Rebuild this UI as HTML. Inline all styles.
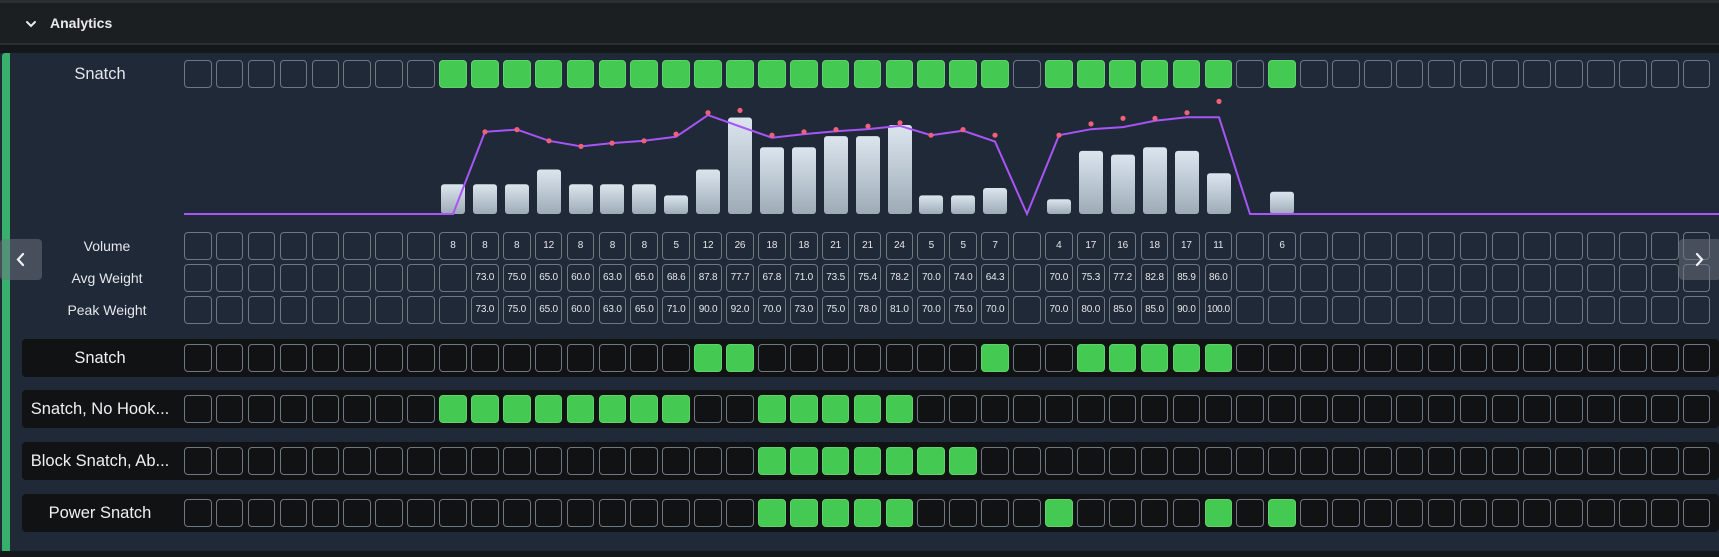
<!DOCTYPE html>
<html><head><meta charset="utf-8"><style>
*{margin:0;padding:0;box-sizing:border-box}
body{width:1719px;height:557px;background:#15181b;position:relative;overflow:hidden;font-family:"Liberation Sans",sans-serif;color:#e5e7eb}
.hdr{position:absolute;left:0;top:0;width:1719px;height:45px;background:#1c1f22;border-top:3px solid #2b2f33;border-bottom:2px solid #2b2f33}
.hdr span{position:absolute;left:50px;top:12px;font-size:14px;font-weight:bold;color:#e8ebee}
.panel{position:absolute;left:0;top:53px;width:1719px;height:498px;background:#1f2937}
.gbar{position:absolute;left:2px;top:53px;width:8px;height:498px;background:#36b06a;border-radius:3px 0 0 0}
.row{position:absolute;left:184px;display:flex}
.row i{display:block;width:27.6px;height:27.6px;margin-right:4.3px;border:1.3px solid #6f7782;border-radius:4px;font-style:normal;font-size:10px;color:#e5e7eb;text-align:center;line-height:25px;letter-spacing:-0.2px;flex:none}
.row i.g{background:#44c952;border-color:#5fd26b}
.lbl{position:absolute;left:37px;width:140px;text-align:center;font-size:14px;color:#e5e7eb}
.dk{position:absolute;left:22px;width:1697px;height:38px;background:#111214;border-radius:4px}
.dk span{position:absolute;left:0;width:156px;text-align:center;top:10px;font-size:16.5px;color:#eef0f2;white-space:nowrap}
.nav{position:absolute;top:239px;width:42px;height:41px;background:rgba(110,118,128,.5);border-radius:4px}
</style></head><body>
<div class="hdr"><svg style="position:absolute;left:24px;top:14px" width="14" height="14" viewBox="0 0 14 14"><path d="M3 5 L7 9 L11 5" stroke="#e8ebee" stroke-width="2" fill="none" stroke-linecap="round"/></svg><span>Analytics</span></div>
<div class="panel"></div>
<div class="gbar"></div>
<div class="lbl" style="top:65px;font-size:16.5px;left:30px">Snatch</div>
<div class="row" style="top:60px"><i></i><i></i><i></i><i></i><i></i><i></i><i></i><i></i><i class=g></i><i class=g></i><i class=g></i><i class=g></i><i class=g></i><i class=g></i><i class=g></i><i class=g></i><i class=g></i><i class=g></i><i class=g></i><i class=g></i><i class=g></i><i class=g></i><i class=g></i><i class=g></i><i class=g></i><i class=g></i><i></i><i class=g></i><i class=g></i><i class=g></i><i class=g></i><i class=g></i><i class=g></i><i></i><i class=g></i><i></i><i></i><i></i><i></i><i></i><i></i><i></i><i></i><i></i><i></i><i></i><i></i><i></i></div>
<svg style="position:absolute;left:0;top:0" width="1719" height="240">
<defs><linearGradient id="bg" x1="0" y1="0" x2="0" y2="1"><stop offset="0" stop-color="#dbe5ee"/><stop offset="1" stop-color="#9eabb7"/></linearGradient></defs>
<g fill="url(#bg)">
<rect x="441" y="184.3" width="24" height="29.7" rx="3"/>
<rect x="473" y="184.3" width="24" height="29.7" rx="3"/>
<rect x="505" y="184.3" width="24" height="29.7" rx="3"/>
<rect x="537" y="169.5" width="24" height="44.5" rx="3"/>
<rect x="569" y="184.3" width="24" height="29.7" rx="3"/>
<rect x="600" y="184.3" width="24" height="29.7" rx="3"/>
<rect x="632" y="184.3" width="24" height="29.7" rx="3"/>
<rect x="664" y="195.4" width="24" height="18.6" rx="3"/>
<rect x="696" y="169.5" width="24" height="44.5" rx="3"/>
<rect x="728" y="117.5" width="24" height="96.5" rx="3"/>
<rect x="760" y="147.2" width="24" height="66.8" rx="3"/>
<rect x="792" y="147.2" width="24" height="66.8" rx="3"/>
<rect x="824" y="136.1" width="24" height="77.9" rx="3"/>
<rect x="856" y="136.1" width="24" height="77.9" rx="3"/>
<rect x="888" y="125" width="24" height="89" rx="3"/>
<rect x="919" y="195.4" width="24" height="18.6" rx="3"/>
<rect x="951" y="195.4" width="24" height="18.6" rx="3"/>
<rect x="983" y="188" width="24" height="26" rx="3"/>
<rect x="1047" y="199.2" width="24" height="14.8" rx="3"/>
<rect x="1079" y="150.9" width="24" height="63.1" rx="3"/>
<rect x="1111" y="154.6" width="24" height="59.4" rx="3"/>
<rect x="1143" y="147.2" width="24" height="66.8" rx="3"/>
<rect x="1175" y="150.9" width="24" height="63.1" rx="3"/>
<rect x="1207" y="173.2" width="24" height="40.8" rx="3"/>
<rect x="1270" y="191.7" width="24" height="22.3" rx="3"/>
</g>
<polyline fill="none" stroke="#a855f7" stroke-width="2" points="184,214 453,214 485,131.8 517,129.6 549,140.8 581,146.4 612,143.1 644,140.8 676,136.8 708,115.1 740,126.5 772,137.7 804,134.1 836,131.2 868,129.1 900,125.9 931,135.2 963,130.7 995,141.6 1027,214 1059,135.2 1091,129.2 1123,127.1 1155,120.8 1187,117.3 1219,117.2 1250,214 1719,214"/>
<g fill="#f0607a">
<circle cx="485" cy="131.8" r="2.6"/><circle cx="517" cy="129.6" r="2.6"/><circle cx="549" cy="140.8" r="2.6"/><circle cx="581" cy="146.4" r="2.6"/><circle cx="612" cy="143.1" r="2.6"/><circle cx="644" cy="140.8" r="2.6"/><circle cx="676" cy="134.1" r="2.6"/><circle cx="708" cy="112.7" r="2.6"/><circle cx="740" cy="110.4" r="2.6"/><circle cx="772" cy="135.2" r="2.6"/><circle cx="804" cy="131.8" r="2.6"/><circle cx="836" cy="129.6" r="2.6"/><circle cx="868" cy="126.2" r="2.6"/><circle cx="900" cy="122.8" r="2.6"/><circle cx="931" cy="135.2" r="2.6"/><circle cx="963" cy="129.6" r="2.6"/><circle cx="995" cy="135.2" r="2.6"/>
<circle cx="1059" cy="135.2" r="2.6"/><circle cx="1091" cy="123.9" r="2.6"/><circle cx="1123" cy="118.3" r="2.6"/><circle cx="1155" cy="118.3" r="2.6"/><circle cx="1187" cy="112.7" r="2.6"/><circle cx="1219" cy="101.4" r="2.6"/>
</g>
</svg>
<div class="lbl" style="top:238px">Volume</div>
<div class="lbl" style="top:270px">Avg Weight</div>
<div class="lbl" style="top:302px">Peak Weight</div>
<div class="row" style="top:232px"><i></i><i></i><i></i><i></i><i></i><i></i><i></i><i></i><i>8</i><i>8</i><i>8</i><i>12</i><i>8</i><i>8</i><i>8</i><i>5</i><i>12</i><i>26</i><i>18</i><i>18</i><i>21</i><i>21</i><i>24</i><i>5</i><i>5</i><i>7</i><i></i><i>4</i><i>17</i><i>16</i><i>18</i><i>17</i><i>11</i><i></i><i>6</i><i></i><i></i><i></i><i></i><i></i><i></i><i></i><i></i><i></i><i></i><i></i><i></i><i></i></div>
<div class="row" style="top:264px"><i></i><i></i><i></i><i></i><i></i><i></i><i></i><i></i><i></i><i>73.0</i><i>75.0</i><i>65.0</i><i>60.0</i><i>63.0</i><i>65.0</i><i>68.6</i><i>87.8</i><i>77.7</i><i>67.8</i><i>71.0</i><i>73.5</i><i>75.4</i><i>78.2</i><i>70.0</i><i>74.0</i><i>64.3</i><i></i><i>70.0</i><i>75.3</i><i>77.2</i><i>82.8</i><i>85.9</i><i>86.0</i><i></i><i></i><i></i><i></i><i></i><i></i><i></i><i></i><i></i><i></i><i></i><i></i><i></i><i></i><i></i></div>
<div class="row" style="top:296px"><i></i><i></i><i></i><i></i><i></i><i></i><i></i><i></i><i></i><i>73.0</i><i>75.0</i><i>65.0</i><i>60.0</i><i>63.0</i><i>65.0</i><i>71.0</i><i>90.0</i><i>92.0</i><i>70.0</i><i>73.0</i><i>75.0</i><i>78.0</i><i>81.0</i><i>70.0</i><i>75.0</i><i>70.0</i><i></i><i>70.0</i><i>80.0</i><i>85.0</i><i>85.0</i><i>90.0</i><i style="letter-spacing:-0.5px">100.0</i><i></i><i></i><i></i><i></i><i></i><i></i><i></i><i></i><i></i><i></i><i></i><i></i><i></i><i></i><i></i></div>

<div class="dk" style="top:339px"><span>Snatch</span></div>
<div class="row" style="top:344px"><i></i><i></i><i></i><i></i><i></i><i></i><i></i><i></i><i></i><i></i><i></i><i></i><i></i><i></i><i></i><i></i><i class=g></i><i class=g></i><i></i><i></i><i></i><i></i><i></i><i></i><i></i><i class=g></i><i></i><i></i><i class=g></i><i class=g></i><i class=g></i><i class=g></i><i class=g></i><i></i><i></i><i></i><i></i><i></i><i></i><i></i><i></i><i></i><i></i><i></i><i></i><i></i><i></i><i></i></div>
<div class="dk" style="top:390px"><span>Snatch, No Hook...</span></div>
<div class="row" style="top:395px"><i></i><i></i><i></i><i></i><i></i><i></i><i></i><i></i><i class=g></i><i class=g></i><i class=g></i><i class=g></i><i class=g></i><i class=g></i><i class=g></i><i class=g></i><i></i><i></i><i class=g></i><i class=g></i><i class=g></i><i class=g></i><i class=g></i><i></i><i></i><i></i><i></i><i></i><i></i><i></i><i></i><i></i><i></i><i></i><i></i><i></i><i></i><i></i><i></i><i></i><i></i><i></i><i></i><i></i><i></i><i></i><i></i><i></i></div>
<div class="dk" style="top:442px"><span>Block Snatch, Ab...</span></div>
<div class="row" style="top:447px"><i></i><i></i><i></i><i></i><i></i><i></i><i></i><i></i><i></i><i></i><i></i><i></i><i></i><i></i><i></i><i></i><i></i><i></i><i class=g></i><i class=g></i><i class=g></i><i class=g></i><i class=g></i><i class=g></i><i class=g></i><i></i><i></i><i></i><i></i><i></i><i></i><i></i><i></i><i></i><i></i><i></i><i></i><i></i><i></i><i></i><i></i><i></i><i></i><i></i><i></i><i></i><i></i><i></i></div>
<div class="dk" style="top:494px"><span>Power Snatch</span></div>
<div class="row" style="top:499px"><i></i><i></i><i></i><i></i><i></i><i></i><i></i><i></i><i></i><i></i><i></i><i></i><i></i><i></i><i></i><i></i><i></i><i></i><i class=g></i><i class=g></i><i class=g></i><i class=g></i><i class=g></i><i></i><i></i><i></i><i></i><i class=g></i><i></i><i></i><i></i><i></i><i class=g></i><i></i><i class=g></i><i></i><i></i><i></i><i></i><i></i><i></i><i></i><i></i><i></i><i></i><i></i><i></i><i></i></div>

<div class="nav" style="left:0"><svg width="42" height="41" viewBox="0 0 42 41"><path d="M23 15 L18 20.5 L23 26" stroke="#eef2f5" stroke-width="2.2" fill="none" stroke-linecap="round"/></svg></div>
<div class="nav" style="left:1679px"><svg width="42" height="41" viewBox="0 0 42 41"><path d="M18 15 L23 20.5 L18 26" stroke="#eef2f5" stroke-width="2.2" fill="none" stroke-linecap="round"/></svg></div>
</body></html>
